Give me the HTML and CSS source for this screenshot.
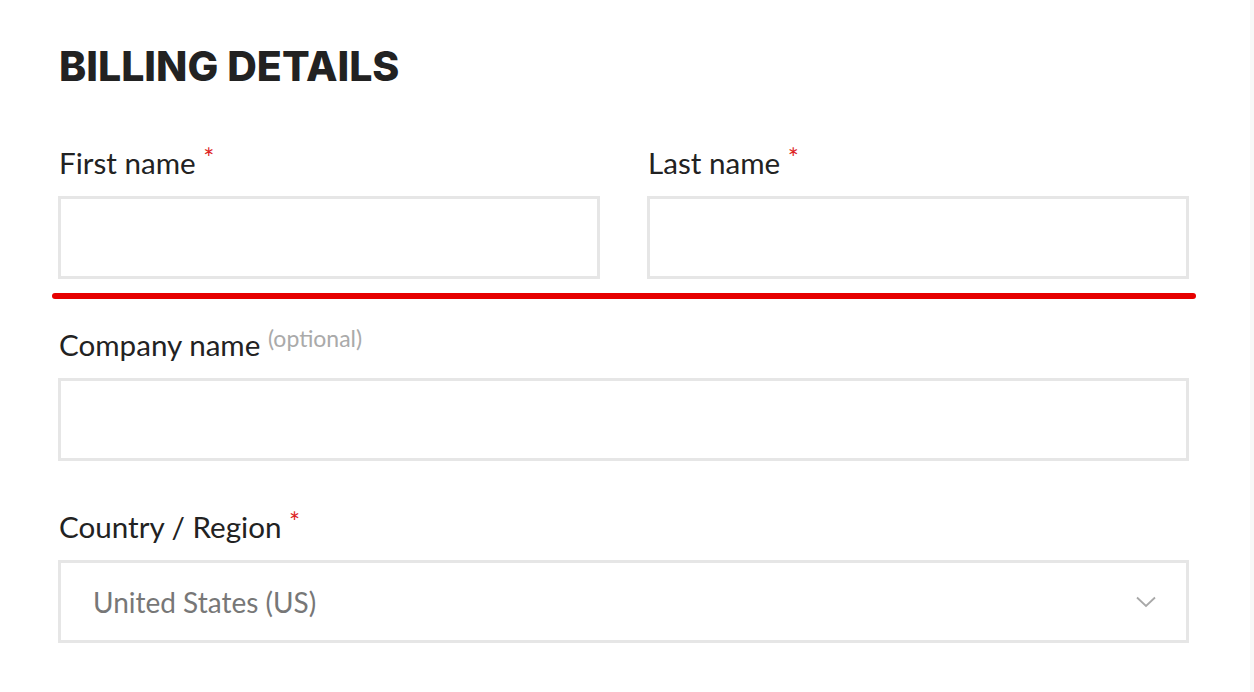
FILE: index.html
```html
<!DOCTYPE html>
<html>
  <head>
    <title>Checkout - Billing details</title>
    <link rel="stylesheet" href="styles.css">
  </head>
  <body>
    <div class="page">
      <h3 class="billing-title">Billing details</h3>
      <form class="billing-form">
        <div class="row-split">
          <p class="form-row">
            <label for="billing_first_name">First name <abbr class="required" title="required">*</abbr></label>
            <input type="text" class="input-text" id="billing_first_name">
          </p>
          <p class="form-row">
            <label for="billing_last_name">Last name <abbr class="required" title="required">*</abbr></label>
            <input type="text" class="input-text" id="billing_last_name">
          </p>
        </div>
        <div class="mark-line"></div>
        <p class="form-row">
          <label for="billing_company">Company name <span class="optional">(optional)</span></label>
          <input type="text" class="input-text" id="billing_company">
        </p>
        <p class="form-row">
          <label for="billing_country">Country / Region <abbr class="required" title="required">*</abbr></label>
          <span class="select-box" id="billing_country">
            <span class="select-value">United States (US)</span>
            <svg class="select-arrow" width="20" height="12" viewBox="0 0 20 12">
              <polyline points="1,1.5 10,10 19,1.5" fill="none" stroke="#a8a8a8" stroke-width="1.8"/>
            </svg>
          </span>
        </p>
      </form>
    </div>
  </body>
</html>
```

FILE: styles.css
```css
html {
  background: #f8f8f8;
}
body {
  margin: 0;
  font-family: Lato, "Open Sans", sans-serif;
  color: #222222;
}
.page {
  width: 1250px;
  min-height: 692px;
  background: #ffffff;
  box-sizing: border-box;
  padding: 38px 61px 0 58px;
}
.billing-title {
  margin: 0 0 0 1px;
  font-family: Inter, "Noto Sans", sans-serif;
  font-weight: 800;
  font-size: 41px;
  line-height: 56px;
  text-transform: uppercase;
  color: #222222;
}
.billing-form {
  margin-top: 49px;
}
.row-split {
  display: grid;
  grid-template-columns: 1fr 1fr;
  column-gap: 47px;
}
.form-row {
  margin: 0 0 46px 0;
}
.row-split .form-row {
  margin-bottom: 0;
}
.form-row label {
  display: block;
  margin: 0 0 13px 1px;
  font-size: 29.6px;
  line-height: 40px;
  color: #222222;
}
.required {
  color: #dd2222;
  text-decoration: none;
  border: none;
  font-size: 26px;
  line-height: 0;
  vertical-align: 6px;
}
.optional {
  color: #aaaaaa;
  font-size: 23px;
  line-height: 0;
  vertical-align: 9px;
}
.input-text, .select-box {
  display: block;
  width: 100%;
  height: 83px;
  box-sizing: border-box;
  border: 3px solid #e6e6e6;
  background: #ffffff;
  margin: 0;
  font-family: Lato, sans-serif;
  font-size: 28px;
}
.mark-line {
  height: 6px;
  margin: 14px -7px 26px -6px;
  background: #e60000;
  border-radius: 3px;
}
.select-box {
  display: flex;
  align-items: center;
  justify-content: space-between;
  padding: 0 30px 0 32px;
}
.select-value {
  color: #777777;
}
```
